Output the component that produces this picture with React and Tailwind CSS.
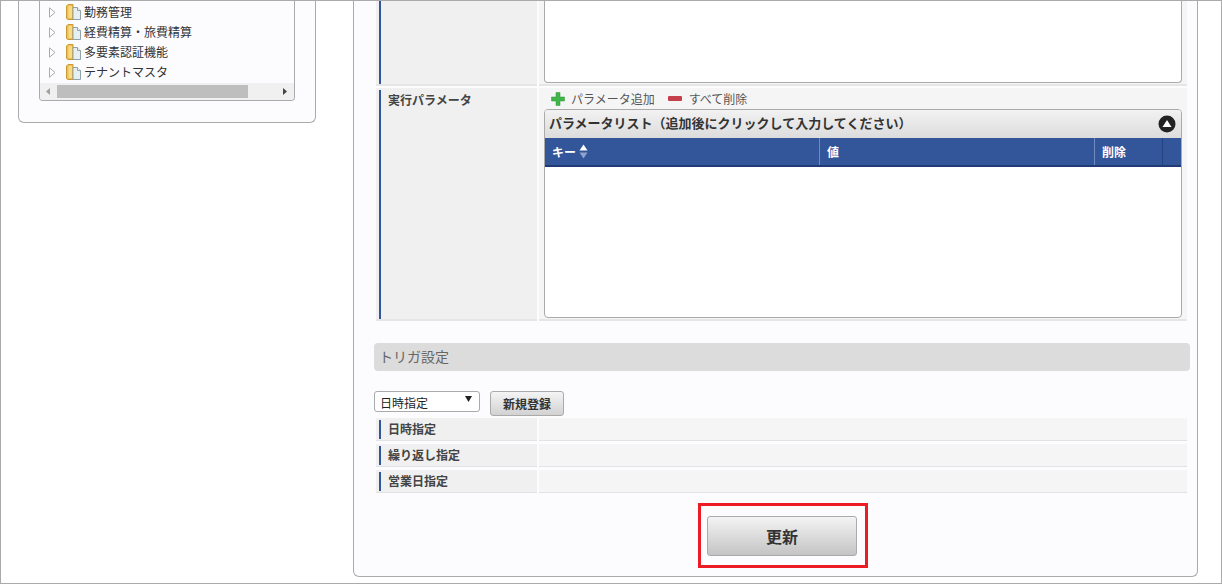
import React from "react";

const FONT = { fontFamily: '"Noto Sans CJK JP", "Liberation Sans", sans-serif' };

const TREE = ["勤務管理", "経費精算・旅費精算", "多要素認証機能", "テナントマスタ"];
const TRIGGERS = ["日時指定", "繰り返し指定", "営業日指定"];

function FolderIcon() {
  return (
    <svg width="15" height="17" viewBox="0 0 15 17" className="shrink-0">
      <path d="M0.5 2 L2 0.5 H7 V15.5 H2 L0.5 14.5 Z" fill="#eebd55" stroke="#c99a35" strokeWidth="1" />
      <path d="M2.5 2 H6 V14 H2.5 Z" fill="#f8dc85" />
      <path d="M7 3.5 H11.5 L14.5 6.5 V15.5 H7 Z" fill="#e6f0f3" stroke="#8fa3a8" strokeWidth="1" />
      <path d="M11.5 3.5 V6.5 H14.5" fill="#fff" stroke="#8fa3a8" strokeWidth="1" />
    </svg>
  );
}

function TreeRow({ label }) {
  return (
    <div className="flex h-5 items-center text-[12px] text-[#333]">
      <svg width="7" height="11" viewBox="0 0 7 11" className="ml-[9px] mr-[10px] shrink-0">
        <path d="M0.5 0.8 L6 5.5 L0.5 10.2 Z" fill="#fff" stroke="#aaa" strokeWidth="1" />
      </svg>
      <FolderIcon />
      <span className="ml-[3px] whitespace-nowrap">{label}</span>
    </div>
  );
}

function RowLabel({ children, className }) {
  return (
    <div className={`flex w-[161px] shrink-0 border-b-2 border-[#e6e6e6] bg-[#f0f0f0] pl-[3px] ${className}`}>
      {children}
    </div>
  );
}

function TriggerRow({ label }) {
  return (
    <div className="mb-[3px] flex h-[23px] gap-[2px]">
      <div className="flex w-[161px] shrink-0 border-b border-[#e2e2e2] bg-[#f0f0f0] pl-[3px] pt-[2px]">
        <div className="flex h-[19px] w-full items-center border-l-2 border-[#335599] pl-[7px] text-[12px] font-bold leading-[18px] text-[#444]">
          <span className="mb-[2px]">{label}</span>
        </div>
      </div>
      <div className="flex-1 border-b border-[#e2e2e2] bg-[#f5f5f5]" />
    </div>
  );
}

export default function App() {
  return (
    <div style={FONT} className="flex h-[584px] w-[1222px] overflow-hidden border border-[#aaa] bg-white">
      {/* left menu */}
      <aside className="ml-[17px] h-[122px] w-[298px] shrink-0 rounded-b-md border-x border-b border-[#aaa] bg-[#fcfcff] px-5">
        <div className="h-[100px] w-[256px] overflow-hidden rounded-b border-x border-b border-[#aaa]">
          <div className="h-[82px] pt-[1px]">
            {TREE.map((t) => (
              <TreeRow key={t} label={t} />
            ))}
          </div>
          <div className="flex h-[17px] items-center bg-[#f0f0f0]">
            <svg width="17" height="17" viewBox="0 0 17 17" className="shrink-0">
              <path d="M10 5 L6 8.5 L10 12 Z" fill="#a0a0a0" />
            </svg>
            <div className="h-[13px] w-[191px] bg-[#bebebe]" />
            <svg width="17" height="17" viewBox="0 0 17 17" className="ml-auto shrink-0">
              <path d="M6 5 L10 8.5 L6 12 Z" fill="#444" />
            </svg>
          </div>
        </div>
      </aside>

      {/* main panel */}
      <main className="ml-[37px] h-[576px] w-[845px] shrink-0 rounded-b-md border-x border-b border-[#aaa] bg-[#fcfcff] pl-5 pr-[7px]">
        <div className="ml-[2px] mr-[3px]">
          <div className="flex h-[85px] gap-[2px]">
            <RowLabel className="h-[85px]">
              <div className="h-full w-full border-l-2 border-[#335599]" />
            </RowLabel>
            <div className="flex-1 border-b-2 border-[#e6e6e6] bg-[#f5f5f5] pl-[5px] pr-[5px]">
              <div className="h-[82px] rounded-b-sm border-x border-b border-[#aaa] bg-white" />
            </div>
          </div>

          <div className="mt-[2px] flex h-[233px] gap-[2px]">
            <RowLabel className="h-[233px] pt-[2px]">
              <div className="h-full w-full border-l-2 border-[#335599] pl-[7px] pt-[1px] text-[12px] font-bold leading-[18px] text-[#444]">
                実行パラメータ
              </div>
            </RowLabel>
            <div className="flex-1 border-b-2 border-[#e6e6e6] bg-[#f5f5f5] pl-[5px] pr-[5px]">
              <div className="flex h-[21px] items-center pl-[7px] text-[12px] text-[#555]">
                <svg width="14" height="14" viewBox="0 0 14 14" className="mr-[6px] shrink-0">
                  <path d="M5 0.5 H9 V5 H13.5 V9 H9 V13.5 H5 V9 H0.5 V5 H5 Z" fill="#3fb54a" stroke="#2c9a38" strokeWidth="0.5" />
                </svg>
                <span>パラメータ追加</span>
                <svg width="14" height="5" viewBox="0 0 14 5" className="ml-[13px] mr-[7px] shrink-0">
                  <rect width="14" height="5" rx="1" fill="#c4404a" />
                </svg>
                <span>すべて削除</span>
              </div>
              <div className="h-[209px] overflow-hidden rounded-sm border border-[#aaa] bg-white">
                <div className="flex h-7 items-center justify-between bg-gradient-to-b from-[#f2f2f2] to-[#dcdcdc] pl-1 pr-[5px] text-[13px] font-bold leading-[18px] text-[#333]">
                  <span className="mb-[2px]">パラメータリスト（追加後にクリックして入力してください）</span>
                  <svg width="18" height="18" viewBox="0 0 18 18">
                    <circle cx="9" cy="9" r="8.5" fill="#222" />
                    <path d="M9 5 L13.5 12 H4.5 Z" fill="#fff" />
                  </svg>
                </div>
                <div className="grid h-[29px] grid-cols-[275px_275px_68px_1fr] border-b-2 border-[#1f3a75] bg-[#335599] text-[12px] font-bold text-white">
                  <div className="flex items-center border-r border-[#6f8abd] pl-[7px]">
                    キー
                    <svg width="9" height="15" viewBox="0 0 9 15" className="ml-[3px]">
                      <path d="M4.5 0.5 L8.5 6.5 H0.5 Z" fill="#fff" />
                      <path d="M0.5 8.5 H8.5 L4.5 14.5 Z" fill="#8fa3cc" />
                    </svg>
                  </div>
                  <div className="flex items-center border-r border-[#6f8abd] pl-[7px]">値</div>
                  <div className="flex items-center border-r border-[#24427f] pl-[7px]">削除</div>
                  <div />
                </div>
              </div>
            </div>
          </div>
        </div>

        {/* trigger settings */}
        <h2 className="mt-[22px] flex h-7 items-center rounded-sm bg-[#dcdcdc] pl-[5px] text-[14px] font-normal leading-[18px] text-[#666]">
          <span className="mb-[2px]">トリガ設定</span>
        </h2>
        <div className="mt-5 flex items-start">
          <div className="flex h-[21px] w-[106px] items-center justify-between rounded-[3px] border border-[#aaa] bg-white pl-[5px] pr-[7px] text-[12px] text-[#222]">
            <span className="mt-[2px]">日時指定</span>
            <svg width="7" height="6" viewBox="0 0 7 6" className="mb-[6px]">
              <path d="M0 0 H7 L3.5 6 Z" fill="#222" />
            </svg>
          </div>
          <button
            type="button"
            className="ml-[10px] h-[25px] w-[74px] rounded-[3px] border border-[#aaa] bg-gradient-to-b from-[#f4f4f4] to-[#d2d2d2] text-[12px] font-bold text-[#333]"
          >
            新規登録
          </button>
        </div>
        <div className="ml-[2px] mr-[3px] mt-[2px]">
          {TRIGGERS.map((t) => (
            <TriggerRow key={t} label={t} />
          ))}
        </div>

        {/* update button with red highlight */}
        <div className="mt-[10px] flex justify-center pl-[2px]">
          <div className="border-[3px] border-[#ed1c24] pb-[9px] pl-[6px] pr-[8px] pt-[10px]">
            <button
              type="button"
              className="h-10 w-[150px] rounded-[3px] border border-[#aaa] bg-gradient-to-b from-[#f4f4f4] to-[#c4c4c4] text-[16px] font-bold text-[#333]"
            >
              更新
            </button>
          </div>
        </div>
      </main>
    </div>
  );
}
